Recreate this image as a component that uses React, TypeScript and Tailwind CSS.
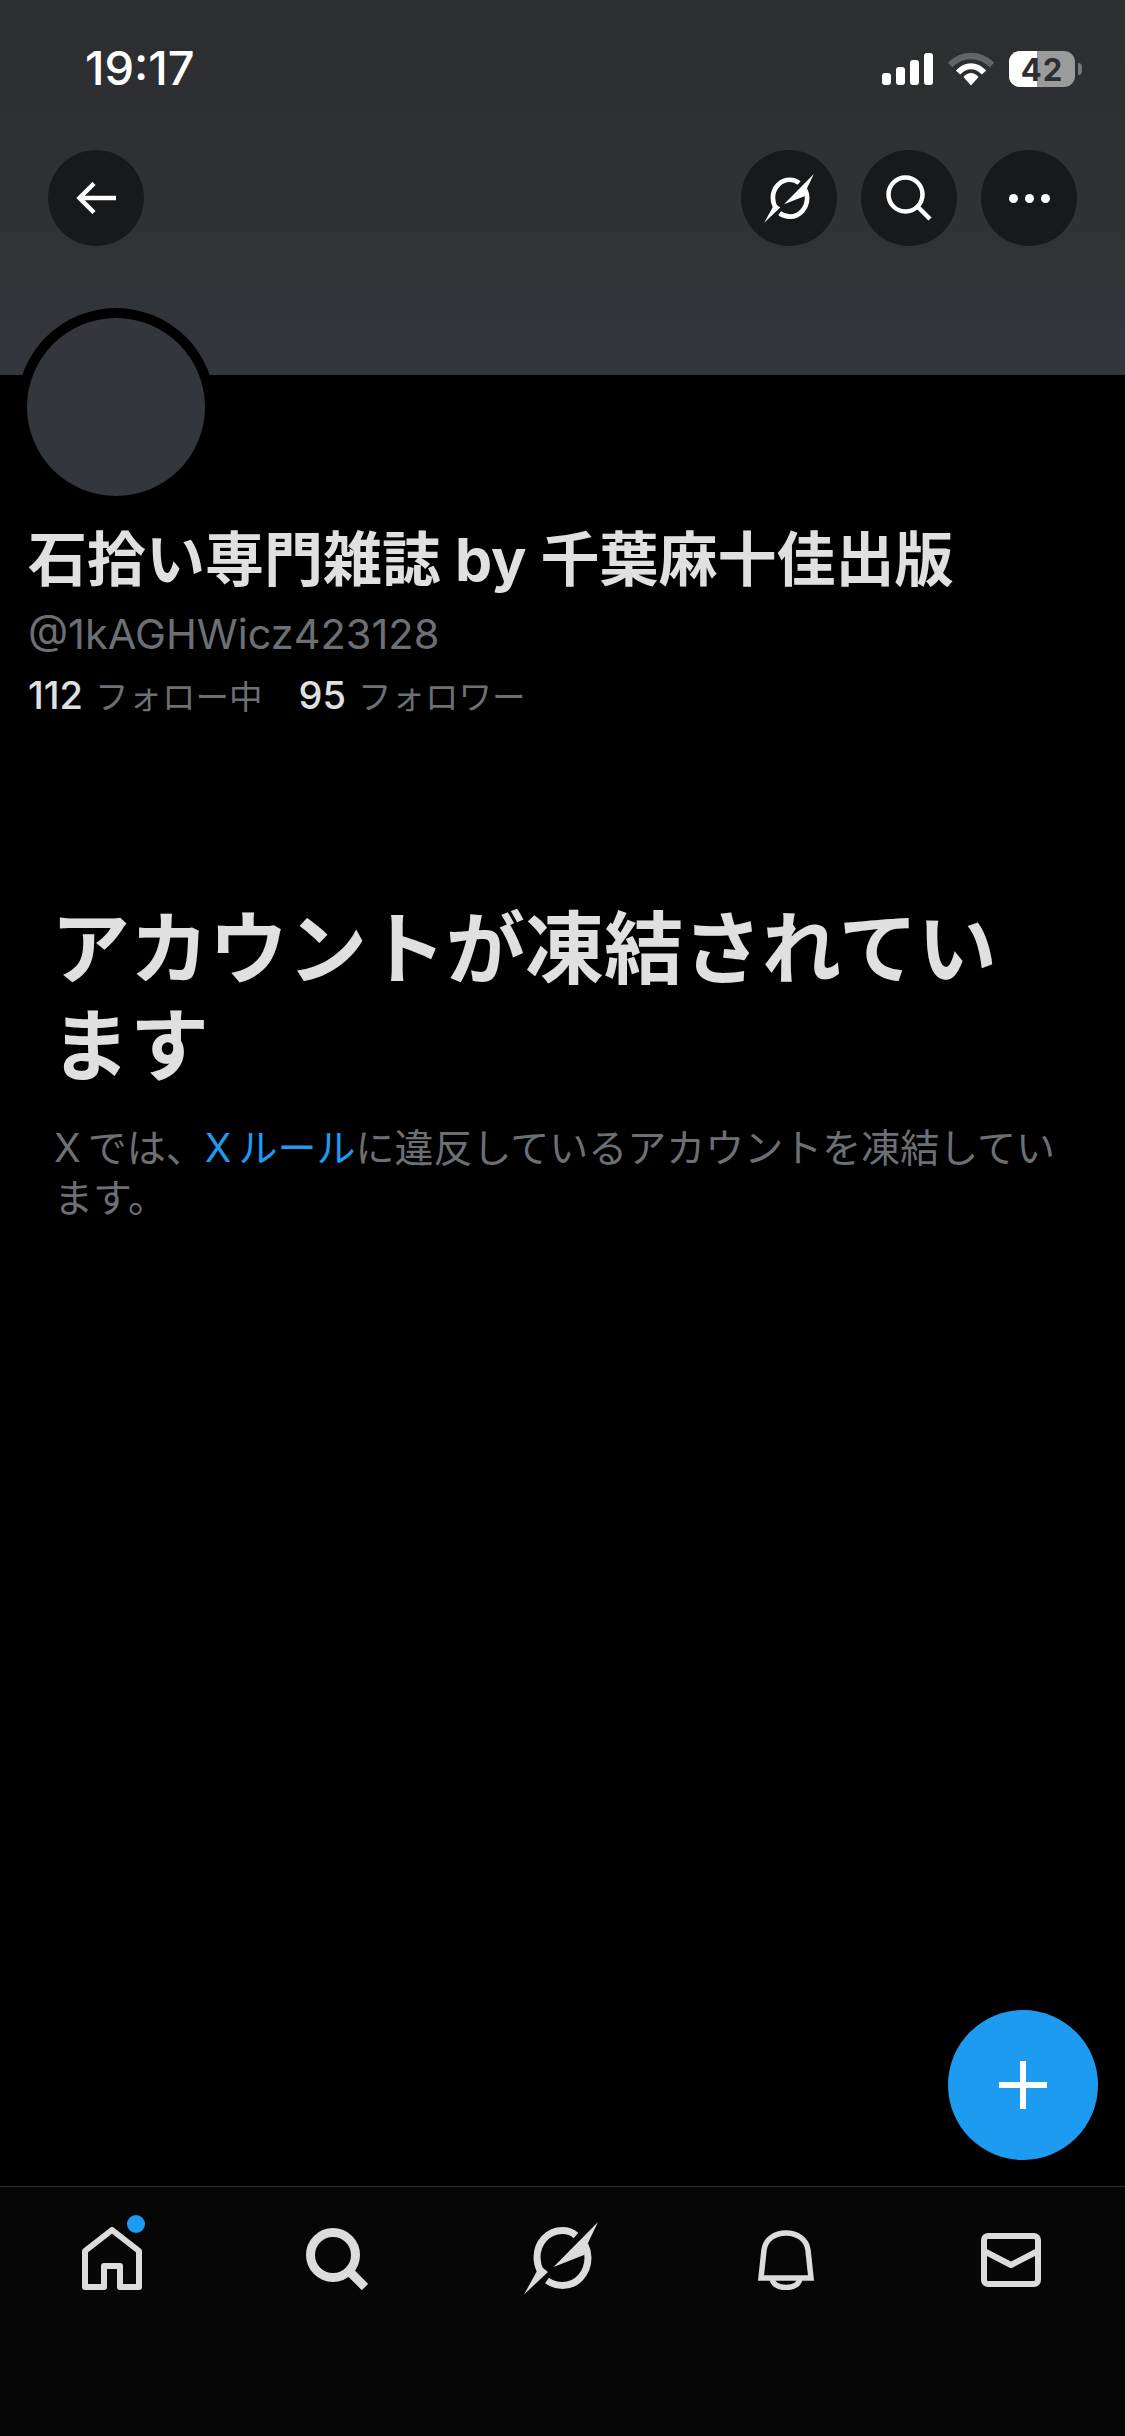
import React from 'react'

const FONT = "font-['Inter','Noto_Sans_CJK_JP',sans-serif]"

// compass-like "Grok" mark, box is 74x73
const SlashCircle: React.FC<{ className: string }> = ({ className }) => (
  <svg viewBox="0 0 74 73" className={className} fill="none">
    <path d="M52 13.500C48 10 43.500 8.600 38.500 8.600C24 8.600 13 20.500 13 35.500C13 41 14.500 45.500 16.500 49.500" stroke="currentColor" strokeWidth="7" />
    <path d="M23 58.500C28 62 33.500 63.500 38.500 63.500C53 63.500 64 51 64 35.500C64 31 63 27 61 23" stroke="currentColor" strokeWidth="7" />
    <path d="M74 0L29.500 45L60 33L64 21Z" fill="currentColor" />
    <path d="M0 72.500L13 49L19 46L24 50Z" fill="currentColor" />
  </svg>
)

const StatusIcons = () => (
  <div className="flex items-center">
    <svg viewBox="0 0 51 32" className="w-[51px] h-[32px] text-white">
      <rect x="0" y="20" width="9" height="12" rx="3" fill="currentColor" />
      <rect x="14" y="14" width="9" height="18" rx="3" fill="currentColor" />
      <rect x="28" y="7" width="9" height="25" rx="3" fill="currentColor" />
      <rect x="42" y="0" width="9" height="32" rx="3" fill="currentColor" />
    </svg>
    <svg viewBox="0 0 46 34" className="w-[46px] h-[34px] ml-[15px]">
      <path d="M2 13C14 1 32 1 44 13" stroke="#636466" strokeWidth="6.500" fill="none" />
      <path d="M10 20.500C18 12 28 12 36 20.500" stroke="#fff" strokeWidth="6" fill="none" />
      <path d="M15.500 25C20 19.500 26 19.500 30.500 25L23 33.500Z" fill="#fff" />
    </svg>
    <div className="relative ml-[15px] w-[66px] h-[36px] rounded-[11px] overflow-hidden bg-[#9b9b9b] flex items-center justify-center">
      <div className="absolute left-0 top-0 bottom-0 w-[28px] bg-white" />
      <span className="relative text-[#2d2e31] text-[31px] font-bold tracking-[1px] leading-none">42</span>
    </div>
    <div className="ml-[3px] w-[4px] h-[12px] rounded-r-full bg-[#77787a]" />
  </div>
)

const RoundButton: React.FC<{ children: React.ReactNode }> = ({ children }) => (
  <button className="w-[96px] h-[96px] rounded-full bg-[#18191b] flex items-center justify-center text-white">
    {children}
  </button>
)

const Banner = () => (
  <header className="h-[375px] shrink-0 bg-gradient-to-b from-[#2b2d2f] to-[#33363a]">
    <div className="h-[150px] pl-[85px] pr-[43px] pb-[20px] flex items-start justify-between">
      <span className="mt-[45px] text-white text-[47px] font-medium leading-[46px]">19:17</span>
      <div className="mt-[51px]">
        <StatusIcons />
      </div>
    </div>
    <nav className="pl-[48px] pr-[48px] flex justify-between">
      <RoundButton>
        <svg viewBox="0 0 40 32" className="w-[40px] h-[32px]" fill="none" stroke="currentColor" strokeWidth="4.500">
          <path d="M40 16H4" />
          <path d="M18 1.500L3.500 16L18 30.500" />
        </svg>
      </RoundButton>
      <div className="flex gap-[24px]">
        <RoundButton>
          <SlashCircle className="w-[50px] h-[49px]" />
        </RoundButton>
        <RoundButton>
          <svg viewBox="0 0 46 46" className="w-[46px] h-[46px]" fill="none" stroke="currentColor" strokeWidth="4.500">
            <circle cx="19.500" cy="19.500" r="17" />
            <path d="M31.500 31.500L44 44" />
          </svg>
        </RoundButton>
        <RoundButton>
          <div className="flex gap-[7px]">
            <span className="w-[9px] h-[9px] rounded-full bg-white" />
            <span className="w-[9px] h-[9px] rounded-full bg-white" />
            <span className="w-[9px] h-[9px] rounded-full bg-white" />
          </div>
        </RoundButton>
      </div>
    </nav>
  </header>
)

const Stat: React.FC<{ count: string; label: string }> = ({ count, label }) => (
  <span className="flex items-baseline gap-[12px]">
    <span className="text-[38px] text-[#e0e0e0] font-medium">{count}</span>
    <span className="text-[33.500px]">{label}</span>
  </span>
)

const Profile = () => (
  <section className="px-[28px]">
    <div className="-mt-[67px] -ml-[11px] w-[198px] h-[198px] rounded-full bg-black p-[10px]">
      <div className="w-full h-full rounded-full bg-[#33363a]" />
    </div>
    <h1 className="mt-[19px] text-[59px] leading-[70px] font-bold text-[#e0e0e0] whitespace-nowrap">
      石拾い専門雑誌 by 千葉麻十佳出版
    </h1>
    <p className="mt-[14px] text-[41.500px] leading-[50px] text-[#6c7075]">@1kAGHWicz423128</p>
    <div className="mt-[14px] flex gap-[36px] leading-[44px] text-[#6c7075]">
      <Stat count="112" label="フォロー中" />
      <Stat count="95" label="フォロワー" />
    </div>
  </section>
)

const SuspendedNotice = () => (
  <section className="mt-[182px] pl-[54px] pr-[40px]">
    <h2 className="-ml-[3px] pr-[30px] text-[79px] leading-[97px] font-bold text-[#e0e0e0]">アカウントが凍結されています</h2>
    <p className="mt-[28px] text-[39px] leading-[50px] text-[#6c7075]">
      X{'\u2009'}では、<span className="text-[#1d9bf0]">X{'\u2009'}ルール</span>に違反しているアカウントを凍結しています。
    </p>
  </section>
)

const TabBar = () => (
  <footer className="h-[250px] shrink-0 pr-[2px] border-t border-[#2e2f31] bg-[#060606] grid grid-cols-5 text-[#dcdcdc]">
    <div className="flex justify-center pt-[40px]">
      <div className="relative">
        <svg viewBox="0 0 60 63" className="w-[60px] h-[63px]" fill="none" stroke="currentColor" strokeWidth="6" strokeLinejoin="round">
          <path d="M3 60V24L30 3L57 24V60H38V39H22V60Z" />
        </svg>
        <span className="absolute -top-[12px] -right-[3px] w-[18px] h-[18px] rounded-full bg-[#1d9bf0]" />
      </div>
    </div>
    <div className="flex justify-center pt-[41px]">
      <svg viewBox="0 0 62 62" className="w-[62px] h-[62px]" fill="none" stroke="currentColor" strokeWidth="9">
        <circle cx="27" cy="27" r="22.500" />
        <path d="M42 42L59 59" />
      </svg>
    </div>
    <div className="flex justify-center pt-[35px]">
      <SlashCircle className="w-[74px] h-[73px]" />
    </div>
    <div className="flex justify-center pt-[43px]">
      <svg viewBox="0 0 56 60" className="w-[56px] h-[60px]" fill="none" stroke="currentColor" strokeWidth="5.500">
        <path d="M3 48L6 20C7.500 9 17 3 28 3C39 3 48.500 9 50 20L53 48Z" />
        <path d="M14 48C14.500 54 20 57.500 28 57.500C36 57.500 41.500 54 42 48" />
      </svg>
    </div>
    <div className="flex justify-center pt-[46px]">
      <svg viewBox="0 0 60 54" className="w-[60px] h-[54px]" fill="none" stroke="currentColor" strokeWidth="6" strokeLinejoin="round">
        <rect x="3" y="3" width="54" height="48" rx="4" />
        <path d="M3 18L30 32L57 18" />
      </svg>
    </div>
  </footer>
)

export default function App() {
  return (
    <div className={`relative h-[2436px] w-[1125px] overflow-hidden bg-black flex flex-col ${FONT}`}>
      <Banner />
      <main className="flex-1">
        <Profile />
        <SuspendedNotice />
      </main>
      <button className="absolute left-[948px] top-[2010px] w-[150px] h-[150px] rounded-full bg-[#1d9bf0] flex items-center justify-center text-white">
        <svg viewBox="0 0 48 48" className="w-[48px] h-[48px]" fill="none" stroke="currentColor" strokeWidth="6">
          <path d="M0 24H48M24 0V48" />
        </svg>
      </button>
      <TabBar />
    </div>
  )
}
